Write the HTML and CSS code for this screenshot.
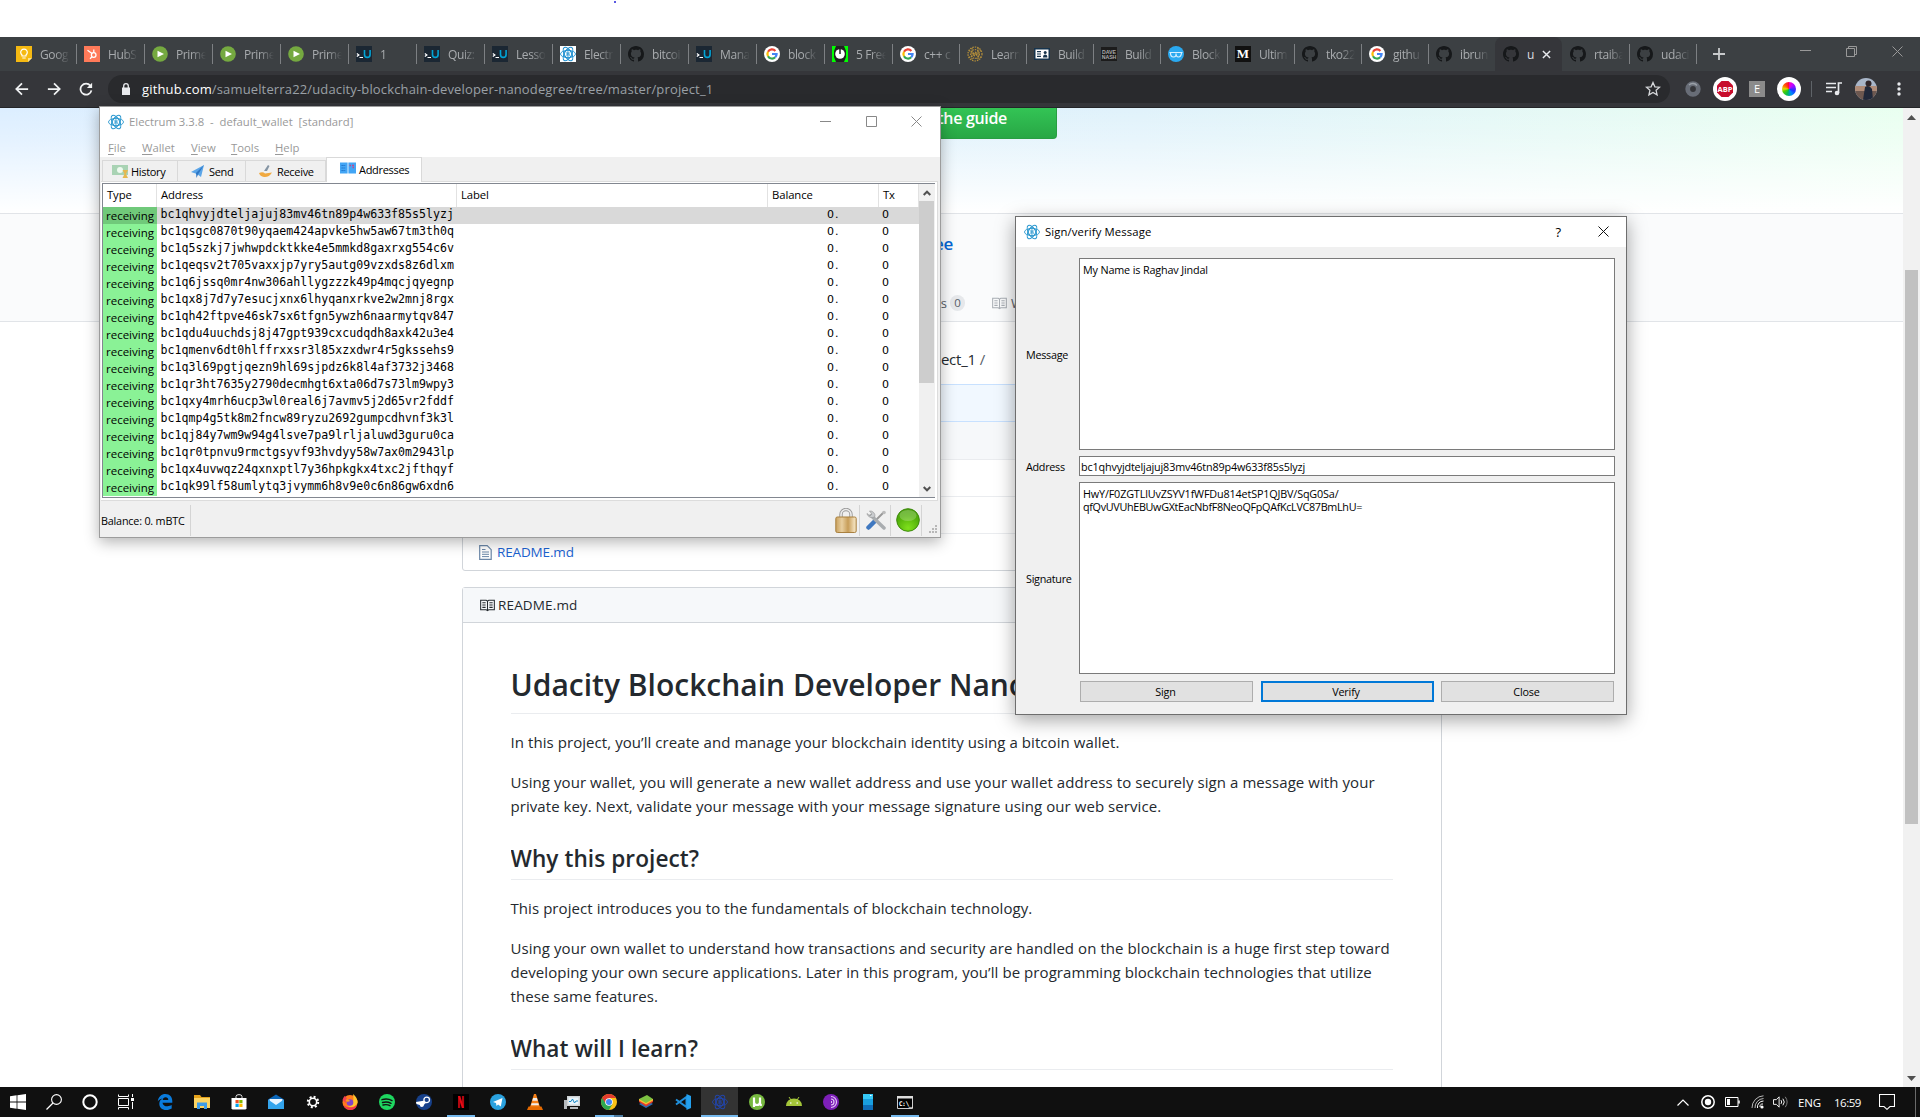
FILE: index.html
```html
<!DOCTYPE html>
<html lang="en">
<head>
<meta charset="utf-8">
<title>Desktop</title>
<link rel="stylesheet" href="styles.css">
</head>
<body>
<svg class="defs" width="0" height="0" aria-hidden="true">
  <defs>
    <symbol id="i-electrum" viewBox="0 0 16 16"><g fill="none" stroke="currentColor" stroke-width=".9"><ellipse cx="8" cy="8" rx="7.500" ry="3.600"/><ellipse cx="8" cy="8" rx="7.500" ry="3.600" transform="rotate(60 8 8)"/><ellipse cx="8" cy="8" rx="7.500" ry="3.600" transform="rotate(120 8 8)"/><circle cx="8" cy="8" r="4.200"/><path d="M7 6v4h1.400a1 1 0 0 0 0-2H7h1.200a1 1 0 0 0 0-2z"/></g></symbol>
    <symbol id="i-github" viewBox="0 0 16 16"><path fill="#16181a" d="M8 0C3.58 0 0 3.58 0 8c0 3.54 2.29 6.53 5.47 7.59.4.07.55-.17.55-.38 0-.19-.01-.82-.01-1.49-2.01.37-2.53-.49-2.69-.94-.09-.23-.48-.94-.82-1.13-.28-.15-.68-.52-.01-.53.63-.01 1.08.58 1.23.82.72 1.21 1.87.87 2.33.66.07-.52.28-.87.51-1.07-1.78-.2-3.64-.89-3.64-3.95 0-.87.31-1.59.82-2.15-.08-.2-.36-1.02.08-2.12 0 0 .67-.21 2.2.82.64-.18 1.32-.27 2-.27s1.36.09 2 .27c1.53-1.04 2.2-.82 2.2-.82.44 1.1.16 1.92.08 2.12.51.56.82 1.27.82 2.15 0 3.07-1.87 3.75-3.65 3.95.29.25.54.73.54 1.48 0 1.07-.01 1.93-.01 2.2 0 .21.15.46.55.38A8.01 8.01 0 0 0 16 8c0-4.42-3.58-8-8-8z"/></symbol>
    <symbol id="i-google" viewBox="0 0 16 16"><circle cx="8" cy="8" r="8" fill="#fff"/><g fill="none" stroke-width="2.200"><path d="M11.400 4.900A4.600 4.600 0 0 0 4 5.800" stroke="#ea4335"/><path d="M4 5.800a4.600 4.600 0 0 0 0 4.400" stroke="#fbbc05"/><path d="M4 10.200a4.600 4.600 0 0 0 7.200 1.100" stroke="#34a853"/><path d="M11.200 11.300A4.600 4.600 0 0 0 12.600 8H8" stroke="#4285f4"/></g></symbol>
    <symbol id="i-play" viewBox="0 0 16 16"><circle cx="8" cy="8" r="7.800" fill="#75a940"/><path d="M5.500 4.800v6.400L12 8z" fill="#fff"/></symbol>
    <symbol id="i-udacity" viewBox="0 0 16 16"><path fill="#1b2733" d="M0 0h16v16H0z"/><path d="M.8 7.500 2.900 9 .8 10.600M3.500 11.500h3.500" fill="none" stroke="#fff" stroke-width="1.200"/><path d="M8.500 4v4.400q0 3 2.800 3t2.800-3V4" fill="none" stroke="#02a3d4" stroke-width="1.600"/></symbol>
    <symbol id="i-book" viewBox="0 0 16 16"><path fill="none" stroke="currentColor" d="M.7 2.500h6L8 3.400l1.300-.9h6v10h-6L8 13.500l-1.300-1H.7zM8 3.400V13M2.500 5H6M2.500 7.500H6M2.500 10H6M10 5h3.500M10 7.500h3.500M10 10h3.500" stroke-width="1.100"/></symbol>
    <radialGradient id="g-ball" cx=".5" cy=".85" r=".9"><stop offset="0" stop-color="#7fe01c"/><stop offset=".6" stop-color="#52b009"/><stop offset="1" stop-color="#4a9c10"/></radialGradient>
    <linearGradient id="g-lock" x2="1"><stop offset="0" stop-color="#c9a15e"/><stop offset=".3" stop-color="#e8cfa0"/><stop offset=".6" stop-color="#c79d58"/><stop offset=".9" stop-color="#f0dcb6"/></linearGradient>
  </defs>
</svg>

<div class="screen">
  <div class="top-strip"><i class="dot"></i></div>

  <div class="tab-strip">
    <div class="tab"><svg class="fav" viewBox="0 0 16 16"><path fill="#f5b912" d="M0 0h16v12l-4 4H0z"/><path fill="#fbe08a" d="M12 16v-4h4z"/><path d="M6 10V9a3.300 3.300 0 1 1 4 0v1zM6.300 12h3.400" fill="none" stroke="#fff" stroke-width="1.200"/></svg><span>Goog</span></div>
    <div class="tab"><svg class="fav" viewBox="0 0 16 16"><path fill="#ff7a59" d="M0 0h16v16H0z"/><g fill="none" stroke="#fff" stroke-width="1.300"><circle cx="9.700" cy="9" r="2.300"/><path d="M9.800 6.700V3.500M8 7.500 3.500 4.200M8 10.800l-2 2"/></g></svg><span>HubS</span></div>
    <div class="tab"><svg class="fav"><use href="#i-play"/></svg><span>Prime</span></div>
    <div class="tab"><svg class="fav"><use href="#i-play"/></svg><span>Prime</span></div>
    <div class="tab"><svg class="fav"><use href="#i-play"/></svg><span>Prime</span></div>
    <div class="tab"><svg class="fav"><use href="#i-udacity"/></svg><span>1</span></div>
    <div class="tab"><svg class="fav"><use href="#i-udacity"/></svg><span>Quiz:</span></div>
    <div class="tab"><svg class="fav"><use href="#i-udacity"/></svg><span>Lesso</span></div>
    <div class="tab"><svg class="fav fav-white"><use href="#i-electrum"/></svg><span>Electr</span></div>
    <div class="tab"><svg class="fav"><use href="#i-github"/></svg><span>bitcoi</span></div>
    <div class="tab"><svg class="fav"><use href="#i-udacity"/></svg><span>Mana</span></div>
    <div class="tab"><svg class="fav"><use href="#i-google"/></svg><span>block</span></div>
    <div class="tab"><svg class="fav" viewBox="0 0 16 16"><path fill="#0f0" d="M0 0h16v16H0z"/><path fill="#222" d="M4 0h8l2 5v6l-2 5H4l-2-5V5z"/><circle cx="8" cy="8" r="4.800" fill="#fff"/><path d="M8 2v6" stroke="#222" stroke-width="1.500"/></svg><span>5 Free</span></div>
    <div class="tab narrow"><svg class="fav"><use href="#i-google"/></svg><span>c++ c</span></div>
    <div class="tab narrow"><svg class="fav" viewBox="0 0 16 16"><g fill="none" stroke="#b8913a" stroke-width="1.200" stroke-dasharray="1.500 1"><circle cx="8" cy="8" r="7"/><circle cx="8" cy="8" r="4.400"/><circle cx="8" cy="8" r="1.800"/><path d="M5 2v12M11 2v12M2 4.500l12 7M14 4.500l-12 7"/></g></svg><span>Learn</span></div>
    <div class="tab narrow"><svg class="fav" viewBox="0 0 16 16"><path fill="#17344d" d="M0 2h16v12H0z"/><path fill="#fff" d="M1.500 3.500h13v9h-13z"/><path fill="#17344d" d="M3 5h4v1.200H3zM3 7.400h4v1.200H3zM3 9.800h4V11H3zM9 11.500q0-3 2.200-3t2.200 3z"/><circle cx="11.200" cy="6.600" r="1.500" fill="#17344d"/></svg><span>Build</span></div>
    <div class="tab narrow"><svg class="fav" viewBox="0 0 16 16"><path fill="#1c1c1c" d="M0 1h16v14H0z"/><text x="8" y="7.600" text-anchor="middle" class="dn">DAVE</text><text x="8" y="13" text-anchor="middle" class="dn">NASH</text></svg><span>Build</span></div>
    <div class="tab narrow"><svg class="fav" viewBox="0 0 16 16"><circle cx="8" cy="8" r="8" fill="#2aa9f0"/><path d="M1.500 6.500h13M2.500 7q0 4 3 4T8 7.500Q8 11 10.500 11t3-4" fill="none" stroke="#d8f0ff" stroke-width="1.200"/></svg><span>Block</span></div>
    <div class="tab narrow"><svg class="fav" viewBox="0 0 16 16"><path fill="#111" d="M0 0h16v16H0z"/><text x="8" y="12.300" text-anchor="middle" class="m-letter">M</text></svg><span>Ultim</span></div>
    <div class="tab narrow"><svg class="fav"><use href="#i-github"/></svg><span>tko22</span></div>
    <div class="tab narrow"><svg class="fav"><use href="#i-google"/></svg><span>githu</span></div>
    <div class="tab narrow no-sep"><svg class="fav"><use href="#i-github"/></svg><span>ibrun</span></div>
    <div class="tab narrow no-sep active"><svg class="fav"><use href="#i-github"/></svg><span>u</span><svg class="tab-x" viewBox="0 0 10 10"><path d="M1 1l8 8M9 1 1 9" stroke="#e8eaed" stroke-width="1.600"/></svg></div>
    <div class="tab narrow"><svg class="fav"><use href="#i-github"/></svg><span>rtaiba</span></div>
    <div class="tab narrow"><svg class="fav"><use href="#i-github"/></svg><span>udaci</span></div>
    <svg class="new-tab" viewBox="0 0 12 12"><path d="M6 0v12M0 6h12" stroke="#c8cacc" stroke-width="1.800"/></svg>
    <div class="win-ctl">
      <svg viewBox="0 0 11 11"><path d="M0 4.500h11" stroke="#999"/></svg>
      <svg viewBox="0 0 11 11"><path d="M.5 2.500h8v8h-8zM2.500 2.500v-2h8v8h-2" fill="none" stroke="#999"/></svg>
      <svg viewBox="0 0 11 11"><path d="m.5.5 10 10M10.500.5l-10 10" stroke="#999"/></svg>
    </div>
  </div>

  <div class="toolbar">
    <svg class="nav" viewBox="0 0 16 16"><path d="M15 8H2M8 1.500 1.500 8 8 14.500" fill="none" stroke="#f1f3f4" stroke-width="2"/></svg>
    <svg class="nav" viewBox="0 0 16 16"><path d="M1 8h13M8 1.500 14.500 8 8 14.500" fill="none" stroke="#f1f3f4" stroke-width="2"/></svg>
    <svg class="nav" viewBox="0 0 16 16"><path d="M13 4.300A6.300 6.300 0 1 0 14.200 9.500" fill="none" stroke="#f1f3f4" stroke-width="2"/><path d="M15 .8v6H9z" fill="#f1f3f4"/></svg>
    <div class="omnibox">
      <svg class="lock" viewBox="0 0 10 12"><path d="M1 4.500h8V12H1z" fill="#e8eaed"/><path d="M2.700 5V3a2.300 2.300 0 0 1 4.600 0v2" fill="none" stroke="#e8eaed" stroke-width="1.300"/></svg>
      <span class="url"><b>github.com</b>/samuelterra22/udacity-blockchain-developer-nanodegree/tree/master/project_1</span>
      <svg class="star" viewBox="0 0 16 16"><path d="m8 1.500 1.900 4.300 4.700.4-3.500 3.100 1 4.600L8 11.500l-4.100 2.400 1-4.600L1.400 6.200l4.700-.4z" fill="none" stroke="#d5d7da" stroke-width="1.300"/></svg>
    </div>
    <div class="extensions">
      <svg class="x16" viewBox="0 0 16 16"><circle cx="8" cy="8" r="5.300" fill="none" stroke="#686d77" stroke-width="4.800"/><path d="M4 4a5.700 5.700 0 0 1 8 .5" fill="none" stroke="#9aa0a8" stroke-width="1.500"/></svg>
      <svg class="x24" viewBox="0 0 24 24"><circle cx="12" cy="12" r="12" fill="#fff"/><path d="M8.500 4h7L20 8.500v7L15.500 20h-7L4 15.500v-7z" fill="#c70d2c"/><text x="12" y="15" text-anchor="middle" class="abp">ABP</text></svg>
      <span class="ext-e">E</span>
      <span class="wheel"><i></i></span>
      <i class="vsep"></i>
      <svg class="x16" viewBox="0 0 16 14"><path d="M0 1.500h10M0 5.500h10M0 9.500h6M12.500 11V1H16" fill="none" stroke="#e8eaed" stroke-width="1.700"/><circle cx="11" cy="11" r="2.300" fill="#e8eaed"/></svg>
      <svg class="avatar" viewBox="0 0 22 22"><clipPath id="av"><circle cx="11" cy="11" r="11"/></clipPath><g clip-path="url(#av)"><path fill="#a9b6c9" d="M0 0h22v22H0z"/><path fill="#b08c78" d="M0 8h22v5H0z"/><path fill="#6d5850" d="M0 13h22v9H0z"/><path fill="#20283a" d="M10 9q4-3 7 2l1 11H8z"/><circle cx="13.500" cy="5.500" r="3" fill="#30262a"/></g></svg>
      <svg class="dots" viewBox="0 0 4 14"><circle cx="2" cy="2" r="1.700" fill="#e8eaed"/><circle cx="2" cy="7" r="1.700" fill="#e8eaed"/><circle cx="2" cy="12" r="1.700" fill="#e8eaed"/></svg>
    </div>
  </div>

  <div class="viewport">
    <div class="page">
      <div class="hero"><div class="guide-btn">Read the guide</div></div>
      <div class="repo-head">
        <div class="repo-name"><span>degree</span></div>
        <div class="repo-nav"><span class="left">cts</span><span class="count">0</span><svg class="book"><use href="#i-book"/></svg><span>Wiki</span></div>
      </div>
      <div class="crumbs"><span><b>project_1</b> /</span></div>
      <div class="files">
        <div class="file-row tease"></div>
        <div class="file-row sha"></div>
        <div class="file-row"></div>
        <div class="file-row"></div>
        <div class="file-row"><svg class="file-icon" viewBox="0 0 13 15"><path d="M.7.7h7.500l4 4v9.600H.7z" fill="none" stroke="#6b87a8" stroke-width="1.200"/><path d="M3 4.500h3.500M3 7h7M3 9.300h7M3 11.600h7" stroke="#6b87a8"/></svg><span class="t-file">README.md</span></div>
      </div>
      <div class="readme">
        <div class="readme-head"><svg class="book"><use href="#i-book"/></svg><span class="t-rh">README.md</span></div>
        <div class="readme-body">
          <h1>Udacity Blockchain Developer Nanodegree</h1>
          <p>In this project, you’ll create and manage your blockchain identity using a bitcoin wallet.</p>
          <p>Using your wallet, you will generate a new wallet address and use your wallet address to securely sign a message with your<br>private key. Next, validate your message with your message signature using our web service.</p>
          <h2>Why this project?</h2>
          <p>This project introduces you to the fundamentals of blockchain technology.</p>
          <p>Using your own wallet to understand how transactions and security are handled on the blockchain is a huge first step toward<br>developing your own secure applications. Later in this program, you’ll be programming blockchain technologies that utilize<br>these same features.</p>
          <h2>What will I learn?</h2>
        </div>
      </div>
    </div>
    <div class="page-scroll"><svg viewBox="0 0 9 5"><path d="M0 5 4.500 0 9 5z" fill="#505050"/></svg><i></i><svg viewBox="0 0 9 5"><path d="M0 0l4.500 5L9 0z" fill="#505050"/></svg></div>
  </div>

  <div class="taskbar">
    <div class="apps">
      <span class="app w36"><svg viewBox="0 0 16 16"><path fill="#fff" d="M0 2.200 6.600 1.300v6.300H0zM7.400 1.200 16 0v7.600H7.400zM0 8.400h6.600v6.300L0 13.800zM7.400 8.400H16V16l-8.600-1.200z"/></svg></span>
      <span class="app w36"><svg viewBox="0 0 16 16"><circle cx="10.500" cy="5.500" r="4.900" fill="none" stroke="#fff" stroke-width="1.100"/><path d="M7 9 .5 15.500" stroke="#fff" stroke-width="1.200"/></svg></span>
      <span class="app w36"><svg viewBox="0 0 16 16"><circle cx="8" cy="8" r="6.700" fill="none" stroke="#fff" stroke-width="2"/></svg></span>
      <span class="app w36 last"><svg viewBox="0 0 16 16"><path d="M.5.500v2h10v-2M.5 15.500v-2h10v2M.5 4.500h10v7H.5zM14.500 0v3M14.500 8v7" fill="none" stroke="#fff"/><path fill="#fff" d="M13 4h3v3h-3z"/></svg></span>
      <span class="app"><svg viewBox="0 0 16 16"><path fill="#0a7bdc" d="M.8 7.500C1.300 2.500 4.600 0 8.400 0c4.500 0 6.900 3.200 6.900 7v1.700H5.500c.2 2.500 2.400 3.600 4.900 3.600 1.700 0 3.100-.5 4.300-1.200v3.400c-1.500.9-3.300 1.500-5.400 1.500-4.500 0-7-2.600-7-6.300 0-2.400 1.200-4.300 3.400-5.300C2.800 5 1.500 6 .8 7.500zM5.700 6h5.600c0-1.700-1-2.700-2.700-2.700S5.900 4.500 5.700 6z"/></svg></span>
      <span class="app"><svg viewBox="0 0 16 16"><path fill="#e5a21a" d="M0 1h6l1.500 2H16v4H0z"/><path fill="#fcd462" d="M0 4h16v10H0z"/><path fill="#3f9de8" d="M3 15V8.500h10V15h-3v-3H6v3z"/></svg></span>
      <span class="app"><svg viewBox="0 0 16 16"><path fill="#fff" d="M.5 4h15v10.500l-1 1h-13l-1-1z"/><path d="M5 4V2.500Q5 .6 8 .6t3 1.900V4" fill="none" stroke="#ddd"/><path fill="#f25022" d="M4.500 6h3.200v3.200H4.500z"/><path fill="#7fba00" d="M8.300 6h3.200v3.200H8.300z"/><path fill="#00a4ef" d="M4.500 9.800h3.200V13H4.500z"/><path fill="#ffb900" d="M8.300 9.800h3.200V13H8.300z"/></svg></span>
      <span class="app"><svg viewBox="0 0 16 16"><path fill="#0b66b8" d="M0 5.500 8 .5l8 5V9H0z"/><path fill="#e8f4ff" d="M1.500 5h13v3L8 12 1.500 8z"/><path fill="#33a4ec" d="M0 5.500 8 11l8-5.500V15H0z"/></svg></span>
      <span class="app"><svg viewBox="0 0 16 16"><circle cx="8" cy="8" r="3.700" fill="none" stroke="#fff" stroke-width="1.600"/><circle cx="8" cy="8" r="5.200" fill="none" stroke="#fff" stroke-width="2" stroke-dasharray="2 2.080"/></svg></span>
      <span class="app"><svg viewBox="0 0 16 16"><circle cx="8" cy="8.500" r="7.500" fill="#ff7b1c"/><path d="M11 0q5 4 4.500 9-4 6-10 3Q13 12 11 0z" fill="#ffc42e"/><path d="M.5 6Q2 2 3 2l2 2.500Q3 6 4 9z" fill="#f23f52"/><path d="M1 11q3 5 8 5 5-.5 6-5-6 5-14 0z" fill="#f2364e"/><circle cx="8" cy="8.500" r="3.300" fill="#8044c8"/><path d="M3.500 6Q7 4.500 8 7q-1 1-3 .8" fill="#ff9a1c"/></svg></span>
      <span class="app"><svg viewBox="0 0 16 16"><circle cx="8" cy="8" r="8" fill="#1ed760"/><path d="M3 5.700q5.500-1.600 10 .9M3.500 8.500q4.700-1.300 8.500.8M4 11q4-1 7 .7" fill="none" stroke="#111" stroke-width="1.400" stroke-linecap="round"/></svg></span>
      <span class="app"><svg viewBox="0 0 16 16"><circle cx="8" cy="8" r="8" fill="#17408a"/><path d="M0 8a8 8 0 0 0 .5 2L7 12l5-6z" fill="#fff"/><circle cx="10.700" cy="5.900" r="2.800" fill="#17408a" stroke="#fff" stroke-width="1.300"/><circle cx="5.800" cy="11" r="2" fill="#fff"/></svg></span>
      <span class="app on"><svg viewBox="0 0 16 16"><path d="M0 0h16v16H0z"/><path fill="#b1060f" d="M5 2h2.200v12H5zM8.900 2h2.200v12H8.900z"/><path fill="#e50914" d="M5 2h2.200l3.900 12H8.900z"/></svg></span>
      <span class="app"><svg viewBox="0 0 16 16"><circle cx="8" cy="8" r="8" fill="#2aa1de"/><path d="m3 8 9.500-4-1.700 8.500-2.700-2-1.600 1.400L6 9z" fill="#fff"/></svg></span>
      <span class="app"><svg viewBox="0 0 16 16"><path fill="#f57f17" d="m7 0h2l4 13H3z"/><path fill="#eee" d="m6.100 4h3.800l.8 2.700H5.300zM4.600 9.300h6.800l.5 2H4z"/><path fill="#e66a00" d="M1.500 12.500h13L16 16H0z"/></svg></span>
      <span class="app"><svg viewBox="0 0 16 16"><path fill="#cfd3d6" d="M3 2h13v10H3z"/><path fill="#e8f5fc" d="M4.500 3.500h10v7h-10z"/><path d="M5 7.500h2l1.500-2.500 2 4 1.500-2h2" fill="none" stroke="#1685c4"/><path fill="#b5b9bd" d="M0 6h3v9H0zM6 13h8v2H6z"/></svg></span>
      <span class="app on half"><svg viewBox="0 0 16 16"><circle cx="8" cy="8" r="8" fill="#fbc116"/><path d="M1.100 4A8 8 0 0 0 8 16l3.500-6L8 8z" fill="#2da94f"/><path d="M1.100 4A8 8 0 0 1 15 4H8v4L4.500 9z" fill="#e33b2e"/><circle cx="8" cy="8" r="3.800" fill="#fff"/><circle cx="8" cy="8" r="3" fill="#4587f3"/></svg></span>
      <span class="app"><svg viewBox="0 0 16 16"><path fill="#2c6cb0" d="m1 10 7 4 7-4-7-4z"/><path fill="#e23b2e" d="m1 8 7 4.500L15 8V6H1z"/><path fill="#fbc02d" d="m1 6.500 7 4 7-4V5H1z"/><path fill="#7cc242" d="m1 5 8-4 6 4-7 4z"/></svg></span>
      <span class="app"><svg viewBox="0 0 16 16"><path d="M1 5.500 11.500 13V3L1 10.500" fill="none" stroke="#2090dc" stroke-width="2"/><path fill="#23a0ee" d="M11.500 0 16 2v12l-4.500 2z"/></svg></span>
      <span class="app on current"><svg viewBox="0 0 16 16"><use href="#i-electrum"/></svg></span>
      <span class="app"><svg viewBox="0 0 16 16"><circle cx="8" cy="8" r="8" fill="#76b83f"/><path d="M5 3.500v9.500M5 8.500q.5 2.500 3 2.500t3-2.500V3.500V9q0 2 1.800 2" fill="none" stroke="#fff" stroke-width="2.200"/></svg></span>
      <span class="app"><svg viewBox="0 0 16 16"><path fill="#a4c639" d="M0 12q.5-7.500 8-7.500T16 12z"/><path d="m3 3 2 3M13 3l-2 3" stroke="#a4c639"/><circle cx="4.800" cy="9" r=".8" fill="#fff"/><circle cx="11.200" cy="9" r=".8" fill="#fff"/></svg></span>
      <span class="app"><svg viewBox="0 0 16 16"><circle cx="8" cy="8" r="8" fill="#7d1fb8"/><path d="M8 2.500a5.500 5.500 0 0 1 0 11M8 5a3 3 0 0 1 0 6" fill="none" stroke="#e2c6f5" stroke-width="1.200"/><path d="M8 7a1 1 0 0 1 0 2z" fill="#fff"/></svg></span>
      <span class="app"><svg viewBox="0 0 16 16"><path fill="#35c8f5" d="M3 0h10v5H3z"/><path fill="#199fe0" d="M3 5h10v6H3z"/><path fill="#0f6db8" d="M3 11h10v5H3z"/><path fill="#fff" d="M10 1h1.500v1H10z"/></svg></span>
      <span class="app on"><svg viewBox="0 0 16 16"><path fill="#000" stroke="#ccc" d="M.5 2.500h15v12H.5z"/><path fill="#ddd" d="M0 2h16v2.500H0z"/><text x="1.800" y="11.800" class="cmd">C:\_</text></svg></span>
    </div>
    <div class="tray">
      <svg class="tr-caret" viewBox="0 0 12 7"><path d="M.5 6.500 6 1l5.500 5.500" fill="none" stroke="#fff" stroke-width="1.200"/></svg>
      <svg class="tr-rec" viewBox="0 0 14 14"><circle cx="7" cy="7" r="6.200" fill="none" stroke="#fff" stroke-width="1.500"/><circle cx="7" cy="7" r="3.200" fill="#fff"/></svg>
      <svg class="tr-bat" viewBox="0 0 15 10"><path d="M.5.500h12.500v9H.5z" fill="none" stroke="#fff"/><path d="M14 3.500v3" stroke="#fff" stroke-width="1.500"/><path d="M2 2h3v6H2z" fill="#fff"/></svg>
      <svg class="tr-wifi" viewBox="0 0 13 14"><g fill="none" stroke="#fff"><path d="M9 12a2.500 2.500 0 0 1 3-3M6.500 13a6 6 0 0 1 6-7"/><path d="M4 13A9 9 0 0 1 12.500 3.500M1 13A12 12 0 0 1 12.500 .8" opacity=".7"/></g><circle cx="11" cy="12" r="1.600" fill="#fff"/></svg>
      <svg class="tr-vol" viewBox="0 0 17 14"><path d="M.5 4.500h3L6.500 1.500v11l-3-3h-3z" fill="none" stroke="#fff"/><path d="M8.500 5q1.500 2 0 4M10.500 3.500q3 3.500 0 7" fill="none" stroke="#fff"/><path d="M13 1.500q4 5.500 0 11" fill="none" stroke="#888"/></svg>
      <span class="t-eng">ENG</span>
      <span class="t-time">16:59</span>
      <svg class="tr-note" viewBox="0 0 16 16"><path d="M.5.500h15v12h-4.500L8 15.300l-3-2.800H.5z" fill="none" stroke="#fff" stroke-width="1.100"/></svg>
      <i class="show-desktop"></i>
    </div>
  </div>

  <section class="window electrum">
    <header class="titlebar">
      <svg class="ticon"><use href="#i-electrum"/></svg>
      <span>Electrum 3.3.8&nbsp; - &nbsp;default_wallet&nbsp; [standard]</span>
      <div class="ctl"><svg viewBox="0 0 11 11"><path d="M0 5.500h11" stroke="#888"/></svg><svg viewBox="0 0 11 11"><path d="M.5.500h10v10H.5z" fill="none" stroke="#888"/></svg><svg viewBox="0 0 11 11"><path d="m.5.500 10 10M10.500.500l-10 10" stroke="#888"/></svg></div>
    </header>
    <nav class="menu"><span class="m1"><u>F</u>ile</span><span class="m2"><u>W</u>allet</span><span class="m3"><u>V</u>iew</span><span class="m4"><u>T</u>ools</span><span class="m5"><u>H</u>elp</span></nav>
    <div class="wtabs">
      <div class="wtab wt1"><svg viewBox="0 0 16 13"><path fill="#a9d3b4" d="M0 0h16v10H0z"/><circle cx="8" cy="5" r="3" fill="#eefaf0"/><path fill="#e6b84e" d="M10.500 5h5.500l-2 4 2 4h-5.500l2-4z"/></svg><span>History</span></div>
      <div class="wtab wt2"><svg viewBox="0 0 14 13"><path d="M0 7 13 0l-3 12-4-3z" fill="#5ba5e8"/><path d="m13 0-8 8 .5 5L7 9.500z" fill="#2d76c4"/></svg><span>Send</span></div>
      <div class="wtab wt3"><svg viewBox="0 0 14 13"><path d="M0 8q4-1.500 6 .5l7-1q-3 5-8 4.500Q1 11.500 0 8z" fill="#f0a940"/><path d="M5 6 9 0l1.500 1L8 6z" fill="#8494a3"/></svg><span>Receive</span></div>
      <div class="wtab wt4"><svg viewBox="0 0 16 12"><path fill="#42a5f5" d="M0 .5h7.600v11H0zM8.400.500H16v11H8.400z"/><path d="M1.500 3.500h4M1.500 6h4M1.500 8.500h4" stroke="#1e70c8" stroke-dasharray="1.300 .6"/><path d="M9.500 3.500h1.500M12 3.500h2M12.500 5.500h1.500" stroke="#c04a8c" stroke-width="1.300"/></svg><span>Addresses</span></div>
    </div>
    <div class="pane">
      <div class="tree">
        <div class="rows">
          <div class="hrow"><span>Type</span><span>Address</span><span>Label</span><span>Balance</span><span>Tx</span></div>
          <div class="row sel"><span class="rc">receiving</span><span class="ad">bc1qhvyjdteljajuj83mv46tn89p4w633f85s5lyzj</span><span></span><span class="ba">0.</span><span class="tx">0</span></div>
          <div class="row"><span class="rc">receiving</span><span class="ad">bc1qsgc0870t90yqaem424apvke5hw5aw67tm3th0q</span><span></span><span class="ba">0.</span><span class="tx">0</span></div>
          <div class="row"><span class="rc">receiving</span><span class="ad">bc1q5szkj7jwhwpdcktkke4e5mmkd8gaxrxg554c6v</span><span></span><span class="ba">0.</span><span class="tx">0</span></div>
          <div class="row"><span class="rc">receiving</span><span class="ad">bc1qeqsv2t705vaxxjp7yry5autg09vzxds8z6dlxm</span><span></span><span class="ba">0.</span><span class="tx">0</span></div>
          <div class="row"><span class="rc">receiving</span><span class="ad">bc1q6jssq0mr4nw306ahllygzzzk49p4mqcjqyegnp</span><span></span><span class="ba">0.</span><span class="tx">0</span></div>
          <div class="row"><span class="rc">receiving</span><span class="ad">bc1qx8j7d7y7esucjxnx6lhyqanxrkve2w2mnj8rgx</span><span></span><span class="ba">0.</span><span class="tx">0</span></div>
          <div class="row"><span class="rc">receiving</span><span class="ad">bc1qh42ftpve46sk7sx6tfgn5ywzh6naarmytqv847</span><span></span><span class="ba">0.</span><span class="tx">0</span></div>
          <div class="row"><span class="rc">receiving</span><span class="ad">bc1qdu4uuchdsj8j47gpt939cxcudqdh8axk42u3e4</span><span></span><span class="ba">0.</span><span class="tx">0</span></div>
          <div class="row"><span class="rc">receiving</span><span class="ad">bc1qmenv6dt0hlffrxxsr3l85xzxdwr4r5gkssehs9</span><span></span><span class="ba">0.</span><span class="tx">0</span></div>
          <div class="row"><span class="rc">receiving</span><span class="ad">bc1q3l69pgtjqezn9hl69sjpdz6k8l4af3732j3468</span><span></span><span class="ba">0.</span><span class="tx">0</span></div>
          <div class="row"><span class="rc">receiving</span><span class="ad">bc1qr3ht7635y2790decmhgt6xta06d7s73lm9wpy3</span><span></span><span class="ba">0.</span><span class="tx">0</span></div>
          <div class="row"><span class="rc">receiving</span><span class="ad">bc1qxy4mrh6ucp3wl0real6j7avmv5j2d65vr2fddf</span><span></span><span class="ba">0.</span><span class="tx">0</span></div>
          <div class="row"><span class="rc">receiving</span><span class="ad">bc1qmp4g5tk8m2fncw89ryzu2692gumpcdhvnf3k3l</span><span></span><span class="ba">0.</span><span class="tx">0</span></div>
          <div class="row"><span class="rc">receiving</span><span class="ad">bc1qj84y7wm9w94g4lsve7pa9lrljaluwd3guru0ca</span><span></span><span class="ba">0.</span><span class="tx">0</span></div>
          <div class="row"><span class="rc">receiving</span><span class="ad">bc1qr0tpnvu9rmctgsyvf93hvdyy58w7ax0m2943lp</span><span></span><span class="ba">0.</span><span class="tx">0</span></div>
          <div class="row"><span class="rc">receiving</span><span class="ad">bc1qx4uvwqz24qxnxptl7y36hpkgkx4txc2jfthqyf</span><span></span><span class="ba">0.</span><span class="tx">0</span></div>
          <div class="row"><span class="rc">receiving</span><span class="ad">bc1qk99lf58umlytq3jvymm6h8v9e0c6n86gw6xdn6</span><span></span><span class="ba">0.</span><span class="tx">0</span></div>
        </div>
        <div class="tscroll"><svg viewBox="0 0 8 6"><path d="M.7 5 4 1.700 7.300 5" fill="none" stroke="#505050" stroke-width="2"/></svg><i></i><svg viewBox="0 0 8 6"><path d="M.7 1 4 4.300 7.300 1" fill="none" stroke="#505050" stroke-width="2"/></svg></div>
      </div>
    </div>
    <footer class="status">
      <span class="bal">Balance: 0. mBTC</span>
      <span class="sicon s1"><svg viewBox="0 0 22 25"><path d="M6 11V6.500a5 5 0 0 1 10 0V11" fill="none" stroke="#999" stroke-width="3.400"/><path d="M6 11V6.500a5 5 0 0 1 10 0V11" fill="none" stroke="#ececec" stroke-width="1.600"/><rect x=".8" y="9" width="20.400" height="15.500" rx="1.500" fill="url(#g-lock)" stroke="#a9803f"/></svg></span>
      <span class="sicon s2"><svg viewBox="0 0 20 20"><path d="m18 2-9 9" stroke="#999" stroke-width="2"/><circle cx="18" cy="2.500" r="1.800" fill="#bbb"/><path d="m8.500 11.500-6 6" stroke="#3f78c0" stroke-width="4.500" stroke-linecap="round"/><path d="m5 5.500 13 12.500" stroke="#a9adb0" stroke-width="3.500" stroke-linecap="round"/><path d="M1 3.500 4 6l2-2-2.500-3A5 5 0 0 1 9 6.500 5 5 0 0 1 1 3.500z" fill="#c9cccf" stroke="#999" stroke-width=".7"/></svg></span>
      <span class="sicon s3"><svg viewBox="0 0 24 24"><circle cx="12" cy="12" r="11.300" fill="url(#g-ball)" stroke="#3d8a0c"/><ellipse cx="12" cy="7.500" rx="8.500" ry="5.500" fill="#fff" opacity=".22"/></svg></span>
      <span class="grip"><svg viewBox="0 0 9 9"><path d="M6 0h2v2H6zM3 3h2v2H3zM6 3h2v2H6zM0 6h2v2H0zM3 6h2v2H3zM6 6h2v2H6z" fill="#b8b8b8"/></svg></span>
    </footer>
  </section>

  <section class="window dialog">
    <header class="titlebar">
      <svg class="ticon"><use href="#i-electrum"/></svg>
      <span class="t-dlg">Sign/verify Message</span>
      <span class="q">?</span>
      <svg class="x" viewBox="0 0 11 11"><path d="m.5.500 10 10M10.500.500l-10 10" stroke="#111"/></svg>
    </header>
    <div class="form">
      <label>Message</label><div class="box"><span>My Name is Raghav Jindal</span></div>
      <label>Address</label><div class="box line"><span>bc1qhvyjdteljajuj83mv46tn89p4w633f85s5lyzj</span></div>
      <label>Signature</label><div class="box"><span>HwY/F0ZGTLlUvZSYV1fWFDu814etSP1QJBV/SqG0Sa/</span><br><span class="t-s2">qfQvUVUhEBUwGXtEacNbfF8NeoQFpQAfKcLVC87BmLhU=</span></div>
    </div>
    <div class="buttons"><span class="btn">Sign</span><span class="btn primary">Verify</span><span class="btn">Close</span></div>
  </section>
</div>
</body>
</html>
```
FILE: styles.css
```css
* { box-sizing: border-box; }
html, body { margin: 0; }
body { width: 1920px; height: 1117px; overflow: hidden; background: #fff; font-family: "Open Sans", "Noto Sans", sans-serif; color: #24292e; }
svg { display: block; flex: none; }
.defs { position: absolute; }
.screen { position: relative; width: 1920px; height: 1117px; display: flex; flex-direction: column; overflow: hidden; }
.top-strip { height: 37px; padding: 1px 0 0 614px; }
.dot { display: block; width: 2px; height: 2px; background: #2222d8; border-radius: 1px; }

/* browser chrome */
.tab-strip { height: 34px; background: #3c4043; display: flex; padding-left: 8px; }
.tab { width: 68px; height: 34px; display: flex; align-items: center; padding: 0 6px 0 8px; position: relative; flex: none; font-size: 12px; color: #a8abae; }
.tab.narrow { width: 67px; }
.tab::after { content: ""; position: absolute; right: -1px; top: 7px; width: 1px; height: 20px; background: #7d8083; }
.tab.no-sep::after { display: none; }
.tab span { flex: 1; min-width: 0; margin-left: 8px; letter-spacing: -.4px; white-space: nowrap; overflow: hidden; -webkit-mask-image: linear-gradient(90deg, #000 50%, transparent); mask-image: linear-gradient(90deg, #000 50%, transparent); }
.tab.active { background: #35363a; border-radius: 8px 8px 0 0; color: #dcdee0; }
.tab.active span { flex: 0 0 10px; -webkit-mask-image: none; mask-image: none; }
.tab-x { width: 9px; height: 9px; margin-left: 5px; }
.fav { width: 16px; height: 16px; }
.fav-white { background: #fff; color: #1c8fd0; }
.m-letter { font: bold 13px "Liberation Serif", serif; fill: #fff; }
.dn { font: bold 5.200px "Liberation Sans", sans-serif; fill: #aaa; }
.new-tab { width: 12px; height: 12px; margin: 11px 0 0 17px; }
.win-ctl { margin-left: auto; display: flex; gap: 35px; padding: 9px 17px 0 0; }
.win-ctl svg { width: 11px; height: 11px; }
.toolbar { height: 37px; background: #35363a; border-bottom: 1px solid #242528; display: flex; align-items: center; padding-left: 14px; }
.nav { width: 16px; height: 14px; margin-right: 16px; }
.omnibox { width: 1562px; height: 28px; margin-left: -2px; border-radius: 14px; background: #292a2d; display: flex; align-items: center; padding: 0 9px 0 13px; flex: none; }
.lock { width: 10px; height: 12px; }
.url { margin-left: 11px; font-size: 13px; letter-spacing: .145px; color: #9aa0a6; white-space: nowrap; }
.url b { font-weight: 400; color: #fff; }
.star { width: 16px; height: 16px; margin-left: auto; }
.extensions { display: flex; align-items: center; padding-left: 15px; }
.x16 { width: 16px; height: 16px; }
.x24 { width: 24px; height: 24px; margin-left: 12px; }
.abp { font: bold 7.500px "Open Sans", sans-serif; fill: #fff; }
.ext-e { width: 16px; height: 16px; margin-left: 12px; background: #8b8b8b; color: #fff; font-size: 11px; line-height: 16px; text-align: center; }
.wheel { width: 24px; height: 24px; margin: 0 10px 0 12px; border-radius: 50%; background: #fff; display: flex; align-items: center; justify-content: center; }
.wheel i { width: 14px; height: 14px; border-radius: 50%; background: conic-gradient(#f0a, #c0f 10%, #23f 30%, #08f 42%, #0b5 55%, #5c0 68%, #dd0 75%, #f60 85%, #f03); }
.vsep { width: 1px; height: 16px; background: #5f6368; margin-right: 14px; }
.extensions .vsep + .x16 { height: 14px; }
.avatar { width: 22px; height: 22px; margin-left: 13px; }
.dots { width: 4px; height: 14px; margin-left: 20px; }

/* repository page */
.viewport { height: 979px; display: flex; overflow: hidden; }
.page { flex: 1; overflow: hidden; }
.hero { height: 106px; border-bottom: 1px solid #e1e4e8; display: flex; justify-content: center; align-items: flex-start; background: linear-gradient(180deg, rgba(255,255,255,0) 0%, rgba(255,255,255,.25) 30%, #fff 100%), linear-gradient(90deg, #dceeff, #e0f2fb 60%, #e9fff0); }
.guide-btn { width: 211px; height: 31px; border: 1px solid #289e42; border-top: 0; border-radius: 0 0 4px 4px; background: linear-gradient(#33c455, #28a745); color: #fff; font-weight: 600; font-size: 16px; line-height: 21px; letter-spacing: -.31px; text-align: center; }
.repo-head { height: 108px; background: #fafbfc; border-bottom: 1px solid #e1e4e8; }
.repo-name { width: 953px; padding-top: 16px; text-align: right; color: #0366d6; font-weight: 600; font-size: 17px; line-height: 28px; letter-spacing: -.3px; }
.repo-nav { display: flex; align-items: center; height: 20px; margin-top: 35px; font-size: 13px; color: #586069; }
.repo-nav .left { width: 947px; text-align: right; }
.count { width: 15px; height: 16px; margin: 0 27px 0 3px; border-radius: 8px; background: #e6e8eb; font-size: 11.500px; line-height: 16px; text-align: center; }
.book { width: 15px; height: 15px; }
.repo-nav .book { color: #a9aeb4; }
.repo-nav .book + span { margin-left: 4px; }
.crumbs { width: 985px; height: 62px; padding-top: 25px; text-align: right; font-size: 15px; line-height: 24px; letter-spacing: -.2px; color: #586069; }
.crumbs b { font-weight: 400; color: #24292e; }
.files { width: 980px; margin-left: 462px; border: 1px solid #d1d5da; border-radius: 3px; height: 187px; }
.file-row { height: 37px; border-top: 1px solid #eaecef; display: flex; align-items: center; padding-left: 16px; }
.tease { height: 38px; background: #f1f8ff; border: 1px solid #c8e1ff; margin: -1px -1px 0; }
.sha { background: #f6f8fa; border-top: 0; }
.file-icon { width: 13px; height: 15px; margin-right: 5px; }
.t-file { font-size: 13.500px; letter-spacing: -.15px; color: #1b62d0; }
.readme { width: 980px; height: 540px; margin: 16px 0 0 462px; border: 1px solid #d1d5da; border-radius: 3px; }
.readme-head { height: 35px; border-bottom: 1px solid #d1d5da; background: #f6f8fa; display: flex; align-items: center; padding-left: 17px; }
.t-rh { margin-left: 3px; font-size: 13.500px; font-weight: 500; letter-spacing: .15px; }
.readme-body { padding: 41px 48px 0 47.500px; font-size: 15px; line-height: 24px; letter-spacing: .067px; white-space: nowrap; }
.readme-body p { margin: 0 0 16px; }
h1, h2 { margin: 0 0 16px; font-weight: 600; border-bottom: 1px solid #eaecef; overflow: hidden; }
h1 { height: 50px; font-size: 30px; line-height: 42px; letter-spacing: 0; }
h2 { height: 38px; margin-top: 24px; font-size: 22.600px; line-height: 33px; }
.page-scroll { width: 17px; background: #f1f1f1; display: flex; flex-direction: column; align-items: center; padding: 7px 0 6px; }
.page-scroll svg { width: 9px; height: 5px; }
.page-scroll i { width: 13px; height: 554px; margin: 150px 0 auto; background: #c1c1c1; }

/* taskbar */
.taskbar { height: 30px; background: #101010; display: flex; justify-content: space-between; }
.apps { display: flex; }
.app { width: 37px; height: 30px; display: flex; align-items: center; justify-content: center; position: relative; }
.app.w36 { width: 36px; }
.app.last { margin-right: 2px; }
.app svg { width: 16px; height: 16px; }
.app.on::after { content: ""; position: absolute; left: 5px; right: 4px; bottom: 0; height: 2px; background: #76b9ed; }
.app.half::after { background: linear-gradient(90deg, #76b9ed 68%, #4d7ba0 68%); }
.app.current { background: #333; color: #2345a8; }
.app.current::after { left: 0; right: 0; }
.cmd { font: bold 6.500px "DejaVu Sans Mono", monospace; fill: #fff; letter-spacing: -.6px; }
.tray { display: flex; align-items: center; color: #fff; font-size: 11.500px; }
.tr-caret { width: 12px; height: 7px; margin-right: 12px; }
.tr-rec { width: 14px; height: 14px; margin-right: 10px; }
.tr-bat { width: 15px; height: 10px; margin-right: 11px; }
.tr-wifi { width: 13px; height: 14px; margin-right: 9px; }
.tr-vol { width: 16px; height: 14px; margin-right: 9px; }
.t-eng { width: 23px; margin-right: 13px; white-space: nowrap; letter-spacing: -.15px; }
.t-time { width: 27px; margin-right: 18px; white-space: nowrap; letter-spacing: -.47px; }
.tr-note { width: 16px; height: 16px; margin-right: 20px; }
.show-desktop { width: 5px; height: 30px; border-left: 1px solid #6a6a6a; }

/* desktop windows */
.window { position: absolute; display: flex; flex-direction: column; background: #f0f0f0; color: #000; }
.titlebar { background: #fff; display: flex; align-items: center; font-size: 11.300px; white-space: nowrap; }
.ticon { width: 16px; height: 16px; margin-right: 5px; color: #2a97cf; }
.electrum { left: 99px; top: 106px; width: 842px; height: 432px; border: 1px solid #9c9c9c; box-shadow: 0 4px 14px rgba(0,0,0,.3); }
.electrum .titlebar { height: 29px; padding-left: 8px; color: #999; }
.ctl { margin-left: auto; display: flex; gap: 34.500px; padding-right: 18px; }
.ctl svg { width: 11px; height: 11px; }
.menu { height: 21px; background: #fff; padding-left: 8px; display: flex; font-size: 11.300px; line-height: 24px; color: #999; }
.menu u { text-underline-offset: 2px; }
.m1 { width: 34px; } .m2 { width: 49px; } .m3 { width: 40px; } .m4 { width: 44px; }
.wtabs { height: 25px; padding-left: 2px; display: flex; align-items: flex-end; font-size: 11px; letter-spacing: -.31px; }
.wtab { height: 22px; border: 1px solid #d9d9d9; border-left: 0; display: flex; align-items: center; }
.wtab svg { height: 13px; margin-right: 3px; }
.wt1 { width: 76px; border-left: 1px solid #d9d9d9; padding-left: 9px; }
.wt1 svg { width: 16px; }
.wt2 { width: 68px; padding-left: 13px; } .wt2 svg { width: 14px; margin-right: 4px; }
.wt3 { width: 80px; padding-left: 13px; } .wt3 svg { width: 14px; margin-right: 4px; }
.wt4 { width: 96px; height: 25px; padding: 0 0 1px 13px; background: #fff; border-bottom: 0; border-left: 1px solid #d9d9d9; position: relative; z-index: 1; }
.wt4 svg { width: 16px; height: 12px; margin-top: -3px; }
.pane { height: 320px; margin: -1px 2px 0 1px; padding: 1px 2px 2px 1px; background: #fff; border: 1px solid #dcdcdc; border-width: 1px 1px 1px 0; }
.tree { height: 315px; border: 1px solid #828790; display: flex; }
.rows { width: 816px; }
.hrow, .row { display: grid; grid-template-columns: 54px 300px 311px 111px 40px; }
.hrow { height: 23px; font-size: 11.300px; line-height: 22px; letter-spacing: -.1px; }
.hrow span { border-right: 1px solid #e2e2e2; padding-left: 4px; }
.row { height: 17px; line-height: 16px; white-space: nowrap; }
.rc { background: #8af296; padding-left: 3px; height: 17px; font-size: 11.500px; line-height: 18px; }
.ad { font: 11.590px/15px "DejaVu Sans Mono", monospace; letter-spacing: .018px; padding-left: 3.500px; }
.ba, .tx { font: 11px/15px "DejaVu Sans", sans-serif; }
.ba { padding-left: 59px; letter-spacing: 1px; }
.tx { padding-left: 3px; }
.sel { background: #d9d9d9; }
.sel .rc { background: #70c97a; }
.tscroll { width: 16px; background: #f0f0f0; display: flex; flex-direction: column; align-items: center; padding: 6px 1px 5px 0; }
.tscroll svg { width: 8px; height: 6px; }
.tscroll i { width: 15px; height: 182px; margin: 5px 0 auto; background: #cdcdcd; }
.status { flex: 1; display: flex; align-items: center; font-size: 10.800px; padding: 3px 3px 1px 1px; }
.bal { width: 90px; height: 31px; line-height: 31px; border-right: 1px solid #d4d4d4; margin-right: auto; white-space: nowrap; letter-spacing: -.2px; }
.sicon { height: 31px; display: flex; align-items: center; border-right: 1px solid #d4d4d4; }
.s1 { width: 25px; } .s1 svg { width: 22px; height: 25px; }
.s2 { width: 31px; padding-left: 6px; } .s2 svg { width: 20px; height: 20px; }
.s3 { width: 31px; padding-left: 4.500px; } .s3 svg { width: 24px; height: 24px; }
.grip { width: 15px; padding: 18px 0 0 7px; }
.grip svg { width: 9px; height: 9px; }
.dialog { left: 1015px; top: 216px; width: 612px; height: 499px; border: 1px solid #6e6e6e; box-shadow: 0 5px 18px rgba(0,0,0,.36); font-size: 10.800px; letter-spacing: -.155px; }
.dialog .titlebar { height: 30px; padding: 0 0 1px 8px; }
.t-dlg { letter-spacing: .12px; }
.q { margin-left: auto; font-size: 13px; margin-right: 36.500px; }
.x { width: 11px; height: 11px; margin-right: 17.500px; }
.form { display: grid; grid-template-columns: 53px 536px; grid-template-rows: 192px 20px 192px; row-gap: 6px; padding: 11px 0 0 10px; align-items: center; white-space: nowrap; }
label { letter-spacing: -.28px; }
.box { height: 100%; background: #fff; border: 1px solid #7a7a7a; padding: 4px 3px; line-height: 13px; }
.line { padding: 3px 1px; }
.t-s2 { letter-spacing: -.325px; }
.buttons { display: grid; grid-template-columns: repeat(3, 173px); column-gap: 7.500px; padding: 7px 0 0 64px; }
.btn { height: 21px; border: 1px solid #adadad; background: #e1e1e1; line-height: 19px; padding-right: 2px; text-align: center; }
.primary { border: 2px solid #0078d7; line-height: 17px; }
```
